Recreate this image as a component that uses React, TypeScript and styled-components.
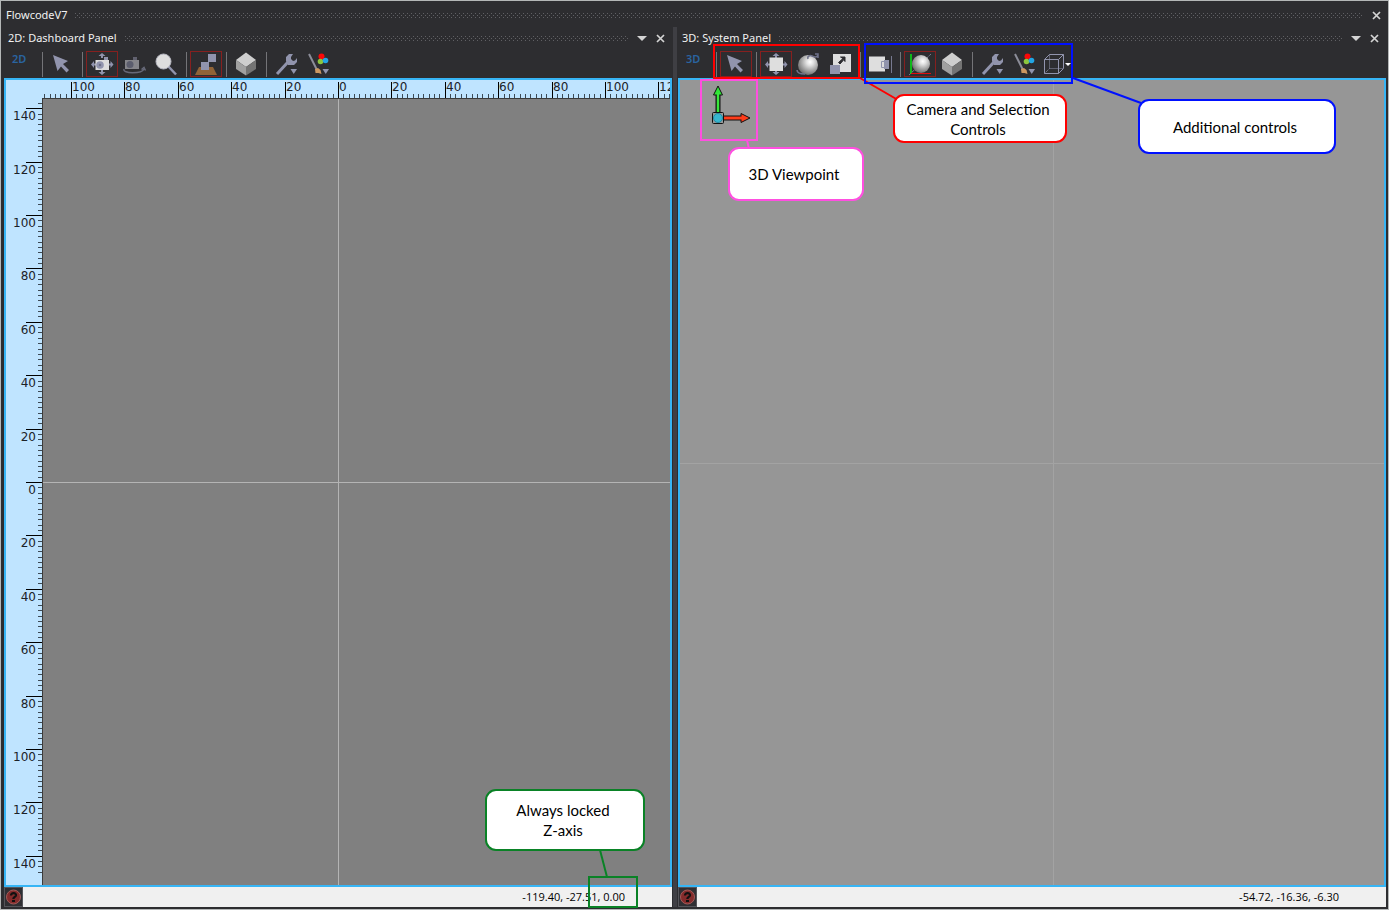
import React, { useLayoutEffect, useRef, useState } from "react";
import styled, { createGlobalStyle, css } from "styled-components";

const GlobalStyle = createGlobalStyle`
  * { box-sizing: border-box; }
  html, body, #root { height: 100%; margin: 0; }
  body {
    background: #2d2d30;
    color: #f1f1f1;
    font-family: "Noto Sans", "Open Sans", sans-serif;
    font-size: 11px;
  }
`;

const Window = styled.main`
  display: flex;
  flex-direction: column;
  min-height: 100%;
  padding: 2px 2px 2px 3px;
  border: 1px solid #b4b7b7;
  background: #2d2d30;
`;

const TitleBar = styled.header<{ $main?: boolean }>`
  display: flex;
  align-items: center;
  gap: 8px;
  height: ${(p) => (p.$main ? 24 : 22)}px;
  padding: ${(p) => (p.$main ? "0 4px 0 2px" : "0 6px 0 4px")};
`;

const Title = styled.h1`
  margin: 0;
  font-size: 11px;
  line-height: 16px;
  font-weight: 400;
  white-space: nowrap;
`;

const Grip = styled.div`
  flex: 1;
  height: 5px;
  background-image: conic-gradient(at 1px 1px, transparent 270deg, #606064 0),
    conic-gradient(at 1px 1px, transparent 270deg, #606064 0);
  background-size: 4px 4px;
  background-position: 0 0, 2px 2px;
`;

const Control = styled.button`
  display: flex;
  align-items: center;
  justify-content: center;
  width: 11px;
  height: 14px;
  padding: 0;
  border: 0;
  background: transparent;
  color: #d4d4d4;
`;

const Panels = styled.div`
  display: grid;
  grid-template-columns: 668fr 4px 708fr;
  column-gap: 1px;
  flex: 1;
`;

const Splitter = styled.div`
  background: #3f3f44;
`;

const Panel = styled.section`
  position: relative;
  display: flex;
  flex-direction: column;
  min-width: 0;
`;

const Toolbar = styled.div`
  display: flex;
  align-items: center;
  height: 29px;
  padding-top: 1px;
`;

const ModeLabel = styled.span`
  width: 34px;
  height: 26px;
  padding-left: 8px;
  color: #2a64a0;
  font-weight: 600;
  line-height: 16px;
`;

const Divider = styled.span`
  width: 1px;
  height: 25px;
  margin: 0 3px 0 4px;
  background: #747478;
`;

const Tool = styled.button<{ $active?: boolean }>`
  display: flex;
  flex: none;
  width: 32px;
  height: 26px;
  padding: 0;
  border: 1px solid ${(p) => (p.$active ? "#86201f" : "transparent")};
  background: transparent;

  svg { display: block; flex: none; width: 30px; height: 24px; }
`;

const Viewport = styled.div<{ $tone: string }>`
  display: flex;
  flex: 1;
  border: 2px solid #37b5f5;
  background: ${(p) => p.$tone};

  > svg { display: block; flex: 1; width: 100%; min-width: 0; }
`;

const StatusBar = styled.footer`
  display: flex;
  align-items: center;
  height: 20px;
  padding-right: 47px;
  background: #f0f0f0;
  color: #000;
  font: 11px/18px "Open Sans", "Noto Sans", sans-serif;
`;

const HelpButton = styled.button`
  width: 19px;
  height: 20px;
  margin-right: auto;
  padding: 0;
  border: 1px solid #55555a;
  background: #2f2f33;

  svg { display: block; }
`;

const Coordinates = styled.output`
  white-space: pre;
`;

interface Box {
  top?: number;
  bottom?: number;
  left?: number;
  right?: number;
  width: number;
  height: number;
}

const overlay = css<{ $box: Box }>`
  position: absolute;
  ${(p) => Object.entries(p.$box).map(([side, px]) => `${side}: ${px}px;`).join(" ")}
`;

const Highlight = styled.div<{ $color: string; $box: Box }>`
  ${overlay}
  border: 2px solid ${(p) => p.$color};
  pointer-events: none;
`;

const Callout = styled.p<{ $color: string; $box: Box }>`
  ${overlay}
  display: flex;
  align-items: center;
  justify-content: center;
  margin: 0;
  padding-right: 4px;
  border: 2px solid ${(p) => p.$color};
  border-radius: 11px;
  background: #fff;
  color: #000;
  font: 15px/20px Lato, sans-serif;
  text-align: center;
  white-space: pre-line;
`;

const LeaderArea = styled.svg<{ $box: Box }>`
  ${overlay}
  overflow: visible;
  pointer-events: none;
`;

const Leader = ({ color, box }: { color: string; box: Box }) => (
  <LeaderArea $box={box}>
    <path d={`M0 0L${box.width} ${box.height}`} stroke={color} strokeWidth="2" />
  </LeaderArea>
);

const STEEL = "#9194ad";

const Cross = () => (
  <svg width="9" height="9" viewBox="0 0 9 9">
    <path d="M1 1l7 7M8 1L1 8" stroke="currentColor" strokeWidth="1.7" />
  </svg>
);

const Caret = () => (
  <svg width="10" height="5" viewBox="0 0 10 5">
    <path d="M0 0h10L5 5z" fill="currentColor" />
  </svg>
);

const Pointer = () => (
  <svg viewBox="0 0 30 24">
    <path d="M6 3l15 6-5 3 6 6-2.500 2.500-5.500-6L10.500 19z" fill={STEEL} />
  </svg>
);

const MoveArrows = () => (
  <path
    d="M15 1l3.500 3H16v2h-2V4h-2.500zM15 23l3.500-3H16v-2h-2v2h-2.500zM4 12.500L7 9v2.500h2v2H7V16zM26.500 12.500l-3-3.500v2.500h-2v2h2V16z"
    fill={STEEL}
  />
);

const CameraPan = () => (
  <svg viewBox="0 0 30 24">
    <MoveArrows />
    <path d="M8.500 8H22v10H8.500z" fill="#dcdcdc" />
    <path d="M17 5h4v3h-4z" fill={STEEL} />
    <circle cx="13" cy="13" r="3.800" fill={STEEL} />
    <circle cx="13" cy="13" r="1.200" fill="#6c6f88" />
  </svg>
);

const CameraOrbit = () => (
  <svg viewBox="0 0 30 24">
    <path d="M6 8h14v9H6z" fill="#85858a" />
    <path d="M14 5h4v3h-4z" fill="#61616f" />
    <circle cx="11" cy="12.500" r="3.500" fill="#5b5d6d" />
    <path d="M5 17c-2 5 18 5 20 0M22.500 17.500l2.500-2 1.500 3" fill="none" stroke="#676979" strokeWidth="1.500" />
  </svg>
);

const Magnifier = () => (
  <svg viewBox="0 0 30 24">
    <path d="M17 14l8 8.500" stroke={STEEL} strokeWidth="2.500" />
    <circle cx="12.500" cy="9.500" r="7.500" fill="#dedede" stroke="#b4b5bf" />
  </svg>
);

const Surface = () => (
  <svg viewBox="0 0 30 24">
    <path d="M8 15h14l4 8H4z" fill="#906337" />
    <path d="M10 10h8v8h-8zM17 2h8v8h-8z" fill={STEEL} />
  </svg>
);

const Cube = () => (
  <svg viewBox="0 0 30 24">
    <path d="M15 .5L25 8l-10 7L5 8z" fill="#cecece" />
    <path d="M5 8l10 7v8.500L5 17z" fill="#a0a0a0" />
    <path d="M25 8l-10 7v8.500L25 17z" fill="#747474" />
  </svg>
);

const Wrench = () => (
  <svg viewBox="0 0 30 24">
    <path d="M6 22L17 10" stroke={STEEL} strokeWidth="3" />
    <path d="M15 9V5l3-3h4l-2 3v2l2 2 2-.5L26 6v4l-3 3h-6z" fill={STEEL} />
    <path d="M19.500 17h6.500l-3.250 5z" fill={STEEL} />
  </svg>
);

const Brush = () => (
  <svg viewBox="0 0 30 24">
    <path d="M6 2l8 16" stroke="#8c8d99" strokeWidth="2" />
    <path d="M12 17l3-1 2.500 2 1 4-3-1h-3z" fill="#cd9861" />
    <circle cx="18.500" cy="4.500" r="3" fill="#fb0808" />
    <circle cx="17.500" cy="9.500" r="2.800" fill="#8cc63e" />
    <circle cx="22.500" cy="8.500" r="2.800" fill="#22a5e4" />
    <path d="M19.500 17h6.500l-3.250 5z" fill={STEEL} />
  </svg>
);

const SquarePan = () => (
  <svg viewBox="0 0 30 24">
    <MoveArrows />
    <path d="M8.500 5.500H22V19H8.500z" fill="#dedede" />
  </svg>
);

const Ball = ({ axes }: { axes?: boolean }) => (
  <svg viewBox="0 0 30 24">
    <defs>
      <radialGradient id="ball" cx="60%" cy="35%" r="65%">
        <stop offset="0" stopColor="#fff" />
        <stop offset="0.250" stopColor="#e4e4e4" />
        <stop offset="1" stopColor="#707070" />
      </radialGradient>
    </defs>
    {axes && <path d="M4 23L26 2" stroke="#777a90" strokeDasharray="3 1" />}
    <circle cx={axes ? 16 : 15} cy={axes ? 12 : 13} r={axes ? 9 : 10} fill="url(#ball)" />
    {axes ? (
      <path d="M6 2v20" stroke="#06e713" strokeWidth="1.500" />
    ) : (
      <path
        d="M15 7c-1-3 2-4 4-3s5 2 6-1M22 2h3v4M4 18c0 4 5 4 8 4"
        fill="none"
        stroke="#6f728a"
        strokeWidth="1.500"
      />
    )}
    {axes && <path d="M6 21.500h20" stroke="#e00e0e" />}
  </svg>
);

const Resize = () => (
  <svg viewBox="0 0 30 24">
    <path d="M8 2h18v18H8z" fill="#dedede" />
    <path d="M5 13h10v9H5z" fill={STEEL} />
    <path d="M13.500 10.500L18 6.500 15.500 5H20v4.500L19 7.500 15 12z" fill="#2d2d30" stroke="#2d2d30" />
  </svg>
);

const Camera = () => (
  <svg viewBox="0 0 30 24">
    <path d="M4 4.500h16v15H4z" fill="#dedede" />
    <path d="M16.500 9.500h4v6h-4z" fill="none" stroke={STEEL} />
    <path d="M19 8h5v9h-5z" fill={STEEL} />
    <path d="M26.500 4v17" stroke="#777a90" />
  </svg>
);

const WireCube = () => (
  <svg viewBox="0 0 30 24">
    <path d="M3.500 7.500h14v14h-14zM3.500 7.500l5-5h14v14l-5 5M17.500 7.500l5-5" fill="none" stroke={STEEL} />
    <path d="M8.500 2.500v14h14M8.500 16.500l-5 5" fill="none" stroke={STEEL} strokeDasharray="1 1" />
    <path d="M24 11h6l-3 3z" fill="#fff" />
  </svg>
);

const Help = () => (
  <HelpButton aria-label="Help">
    <svg width="17" height="18" viewBox="0 0 17 18">
      <circle cx="8.500" cy="9" r="7" fill="#842b2b" stroke="#a35a58" />
      <path d="M6 7.500C6 4 11.500 4.500 11 7.500 10.600 9 8.500 9 8.300 11" fill="none" stroke="#111" strokeWidth="2.200" />
      <path d="M7 12h3v2H7z" fill="#111" />
    </svg>
  </HelpButton>
);

const PITCH = 53.4;
const RULER_X = 36;
const RULER_Y = 18;
const LABEL = { fontFamily: '"DejaVu Sans", sans-serif', fontSize: 12, fill: "#1b2228" };

/** Steps of the given spacing, counted from the centre, whose position lies between start and end. */
function steps(center: number, spacing: number, start: number, end: number) {
  const list: { n: number; at: number }[] = [];
  for (let n = Math.ceil((start - center) / spacing); center + n * spacing < end; n++) {
    list.push({ n, at: Math.round(center + n * spacing) });
  }
  return list;
}

function Dashboard() {
  const ref = useRef<SVGSVGElement>(null);
  const [{ w, h }, setSize] = useState({ w: 0, h: 0 });

  useLayoutEffect(() => {
    const node = ref.current!;
    const measure = () => {
      const box = node.getBoundingClientRect();
      setSize({ w: box.width, h: box.height });
    };
    measure();
    const observer = new ResizeObserver(measure);
    observer.observe(node);
    return () => observer.disconnect();
  }, []);

  const cx = Math.floor(w / 2);
  const cy = Math.floor(h / 2);

  return (
    <svg ref={ref} role="img" aria-label="Dashboard canvas with rulers" shapeRendering="crispEdges">
      <rect width="100%" height="100%" fill="#bfe4ff" />
      {w > 0 && (
        <>
          {steps(cx, PITCH / 10, RULER_X + 2, w).map(({ n, at }) => (
            <path key={`x${n}`} d={`M${at}.5 14v4`} stroke="#3c4a55" />
          ))}
          {steps(cy, PITCH / 10, RULER_Y + 4, h - 12).map(({ n, at }) => (
            <path key={`y${n}`} d={`M32 ${at}.5h4`} stroke="#3c4a55" />
          ))}
          {steps(cx, PITCH, RULER_X, w).map(({ n, at }) => (
            <g key={`X${n}`}>
              <path d={`M${at}.5 2v16`} stroke="#000" />
              <text x={at + 1} y="11" {...LABEL}>{Math.abs(n * 20)}</text>
            </g>
          ))}
          {steps(cy, PITCH, RULER_Y, h).map(({ n, at }) => (
            <g key={`Y${n}`}>
              <path d={`M20 ${at}.5h16`} stroke="#000" />
              <text x="30" y={at + 12} textAnchor="end" {...LABEL}>{Math.abs(n * 20)}</text>
            </g>
          ))}
          <rect x={RULER_X} y={RULER_Y} width={w} height={h} fill="#808080" />
          <path d={`M36.500 ${h}V18.500H${w}`} fill="none" stroke="#3b3b3b" />
          <path d={`M${cx}.5 19V${h}M37 ${cy}.5H${w}`} stroke="#b4b4b4" />
        </>
      )}
    </svg>
  );
}

const Scene = () => (
  <svg role="img" aria-label="3D system view">
    <line x1="53.100%" x2="53.100%" y1="0" y2="100%" stroke="#a3a3a3" shapeRendering="crispEdges" />
    <line x1="0" x2="100%" y1="47.600%" y2="47.600%" stroke="#a3a3a3" shapeRendering="crispEdges" />
    <path d="M38 33V15" stroke="#111" strokeWidth="5" />
    <path d="M38 6l4.500 9h-9z" fill="#2fe436" stroke="#111" />
    <path d="M38 33V13" stroke="#38e73c" strokeWidth="2.500" />
    <path d="M43 38h18" stroke="#111" strokeWidth="5" />
    <path d="M70 38l-9-4.500v9z" fill="#ff3c1a" stroke="#111" />
    <path d="M43 38h19" stroke="#ff3c1a" strokeWidth="3" />
    <rect x="32.500" y="32.500" width="11" height="11" rx="1" fill="#999" stroke="#111" />
    <circle cx="38" cy="38" r="4.500" fill="#37b6cf" stroke="#2488a0" />
  </svg>
);

const RED = "#ff0000";
const BLUE = "#0010ff";
const PINK = "#ff4fe0";
const GREEN = "#0a8226";

const PanelHeader = ({ title }: { title: string }) => (
  <TitleBar>
    <Title as="h2">{title}</Title>
    <Grip />
    <Control aria-label="Panel menu"><Caret /></Control>
    <Control aria-label="Close panel"><Cross /></Control>
  </TitleBar>
);

export default function App() {
  return (
    <>
      <GlobalStyle />
      <Window>
        <TitleBar $main>
          <Title>FlowcodeV7</Title>
          <Grip />
          <Control aria-label="Close"><Cross /></Control>
        </TitleBar>
        <Panels>
          <Panel>
            <PanelHeader title="2D: Dashboard Panel" />
            <Toolbar>
              <ModeLabel>2D</ModeLabel>
              <Divider />
              <Tool aria-label="Select"><Pointer /></Tool>
              <Divider />
              <Tool $active aria-label="Pan camera"><CameraPan /></Tool>
              <Tool aria-label="Orbit camera"><CameraOrbit /></Tool>
              <Tool aria-label="Zoom"><Magnifier /></Tool>
              <Divider />
              <Tool $active aria-label="Snap to surface"><Surface /></Tool>
              <Divider />
              <Tool aria-label="Object"><Cube /></Tool>
              <Divider />
              <Tool aria-label="Settings"><Wrench /></Tool>
              <Tool aria-label="Appearance"><Brush /></Tool>
            </Toolbar>
            <Viewport $tone="#808080"><Dashboard /></Viewport>
            <StatusBar>
              <Help />
              <Coordinates>-119.40, -27.51, 0.00</Coordinates>
            </StatusBar>
            <Leader color={GREEN} box={{ right: 65, bottom: 30, width: 7, height: 27 }} />
            <Highlight $color={GREEN} $box={{ right: 34, bottom: -1, width: 50, height: 32 }} />
            <Callout $color={GREEN} $box={{ right: 27, bottom: 56, width: 160, height: 62 }}>
              {"Always locked\n Z-axis"}
            </Callout>
          </Panel>
          <Splitter />
          <Panel>
            <PanelHeader title="3D: System Panel" />
            <Toolbar>
              <ModeLabel>3D</ModeLabel>
              <Divider />
              <Tool $active aria-label="Select"><Pointer /></Tool>
              <Divider />
              <Tool $active aria-label="Pan"><SquarePan /></Tool>
              <Tool aria-label="Rotate"><Ball /></Tool>
              <Tool aria-label="Scale"><Resize /></Tool>
              <Divider />
              <Tool aria-label="Camera view"><Camera /></Tool>
              <Divider />
              <Tool $active aria-label="World axes"><Ball axes /></Tool>
              <Tool aria-label="Object"><Cube /></Tool>
              <Divider />
              <Tool aria-label="Settings"><Wrench /></Tool>
              <Tool aria-label="Appearance"><Brush /></Tool>
              <Tool aria-label="Wireframe"><WireCube /></Tool>
            </Toolbar>
            <Viewport $tone="#969696"><Scene /></Viewport>
            <StatusBar>
              <Help />
              <Coordinates>-54.72, -16.36, -6.30</Coordinates>
            </StatusBar>
            <Leader color={RED} box={{ top: 51, left: 182, width: 38, height: 22 }} />
            <Leader color={BLUE} box={{ top: 51, left: 395, width: 68, height: 25 }} />
            <Leader color={PINK} box={{ top: 113, left: 69, width: 2, height: 9 }} />
            <Highlight $color={PINK} $box={{ top: 52, left: 22, width: 58, height: 62 }} />
            <Highlight $color={RED} $box={{ top: 17, left: 35, width: 147, height: 35 }} />
            <Highlight $color={BLUE} $box={{ top: 16, left: 186, width: 209, height: 41 }} />
            <Callout $color={RED} $box={{ top: 67, left: 215, width: 174, height: 49 }}>
              {"Camera and Selection\nControls"}
            </Callout>
            <Callout $color={BLUE} $box={{ top: 72, left: 460, width: 198, height: 55 }}>
              Additional controls
            </Callout>
            <Callout $color={PINK} $box={{ top: 120, left: 50, width: 136, height: 54 }}>
              3D Viewpoint
            </Callout>
          </Panel>
        </Panels>
      </Window>
    </>
  );
}
